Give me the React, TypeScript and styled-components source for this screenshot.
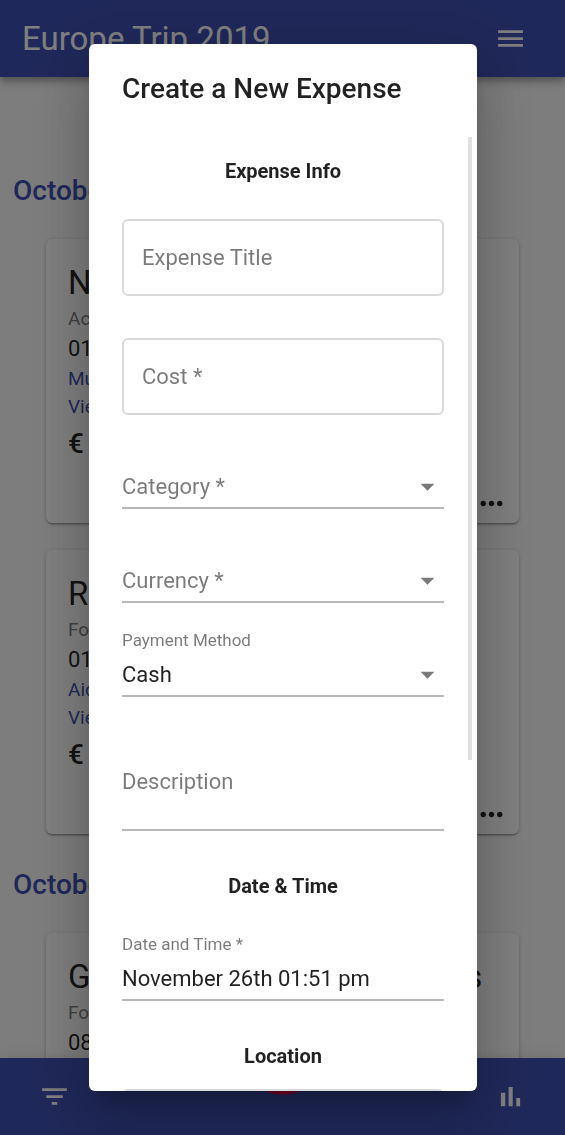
import React from "react";
import styled, { createGlobalStyle, css } from "styled-components";
import {
  MdAdd,
  MdArrowDropDown,
  MdFilterList,
  MdMenu,
  MdMoreHoriz,
} from "react-icons/md";

const color = {
  primary: "#3f51b5",
  secondary: "#f50057",
  page: "#fafafa",
  text: "rgba(0, 0, 0, 0.87)",
  muted: "rgba(0, 0, 0, 0.52)",
  underline: "rgba(0, 0, 0, 0.28)",
  outline: "rgba(0, 0, 0, 0.15)",
};

const GlobalStyle = createGlobalStyle`
  *, *::before, *::after { box-sizing: border-box; }
  body {
    margin: 0;
    background: ${color.page};
    color: ${color.text};
    font-family: Roboto, "Liberation Sans", sans-serif;
    font-size: 22px;
    -webkit-font-smoothing: antialiased;
  }
  h1, h2, h3, p { margin: 0; }
`;

/* ---------- Trip page ---------- */

const Page = styled.div`
  display: flex;
  flex-direction: column;
  height: 100vh;
  overflow: hidden;
`;

const Bar = styled.div`
  position: relative;
  z-index: 1;
  flex: none;
  display: flex;
  align-items: center;
  justify-content: space-between;
  height: 77px;
  padding: 0 38px;
  background: ${color.primary};
  color: #fff;
  box-shadow:
    0 3px 6px -1px rgba(0, 0, 0, 0.2),
    0 6px 7px rgba(0, 0, 0, 0.14),
    0 1px 14px rgba(0, 0, 0, 0.12);
`;

const TopBar = styled(Bar).attrs({ as: "header" })`
  padding-left: 22px;
`;

const TripTitle = styled.h1`
  font-size: 33px;
  font-weight: 400;
  line-height: 44px;
`;

const IconButton = styled.button`
  display: flex;
  padding: 0;
  border: 0;
  background: none;
  color: inherit;
  font-size: 33px;
  cursor: pointer;
`;

const AddButton = styled(IconButton)`
  position: absolute;
  top: -40px;
  left: 50%;
  align-items: center;
  justify-content: center;
  width: 77px;
  height: 77px;
  border-radius: 50%;
  background: ${color.secondary};
  transform: translateX(-50%);
`;

const Timeline = styled.main`
  flex: 1;
  min-height: 0;
  overflow: hidden;
  padding-top: 63px;
`;

const Day = styled.section`
  padding-top: 31px;
`;

const DayHeading = styled.h2`
  padding: 0 13px;
  color: ${color.primary};
  font-size: 28px;
  font-weight: 500;
  line-height: 40px;
`;

const CardList = styled.div`
  display: flex;
  flex-direction: column;
  gap: 27px;
  padding: 28px 46px 0;
`;

const Card = styled.article`
  border-radius: 6px;
  background: #fff;
  box-shadow:
    0 1px 4px rgba(0, 0, 0, 0.2),
    0 1px 1px rgba(0, 0, 0, 0.14),
    0 3px 1px -1px rgba(0, 0, 0, 0.12);
`;

const CardBody = styled.div`
  padding: 22px 22px 20px;
`;

const CardTitle = styled.h3`
  font-size: 33px;
  font-weight: 400;
  line-height: 44px;
  white-space: nowrap;
`;

const CardCategory = styled.p`
  color: ${color.muted};
  font-size: 19px;
  line-height: 28px;
`;

const CardTime = styled.p`
  line-height: 32px;
`;

const CardLink = styled.a`
  display: block;
  color: ${color.primary};
  font-size: 19px;
  line-height: 28px;
  text-decoration: none;
`;

const CardPrice = styled.p`
  font-size: 28px;
  font-weight: 500;
  line-height: 46px;
`;

const CardActions = styled.div`
  display: flex;
  justify-content: flex-end;
  padding: 0 11px 3px;
`;

/* ---------- Dialog ---------- */

const Backdrop = styled.div`
  position: fixed;
  inset: 0;
  z-index: 10;
  display: flex;
  align-items: center;
  justify-content: center;
  padding: 44px 88px 44px 89px;
  background: rgba(0, 0, 0, 0.5);
`;

const DialogFrame = styled.div`
  display: flex;
  width: 100%;
  max-width: 826px;
  max-height: 100%;
  border-radius: 6px;
  box-shadow:
    0 15px 21px -10px rgba(0, 0, 0, 0.2),
    0 33px 52px 4px rgba(0, 0, 0, 0.14),
    0 12px 63px 11px rgba(0, 0, 0, 0.12);
`;

const Dialog = styled.div`
  display: flex;
  flex-direction: column;
  width: 100%;
  border-radius: 6px;
  background: #fff;
  overflow: hidden;
`;

const DialogTitle = styled.h2`
  flex: none;
  padding: 23px 33px 22px;
  font-size: 28px;
  font-weight: 500;
  line-height: 44px;
`;

const ScrollArea = styled.div`
  position: relative;
  display: flex;
  flex: 1;
  min-height: 0;
`;

const Form = styled.form`
  flex: 1;
  min-width: 0;
  padding: 25px 33px;
  overflow-y: auto;
  scrollbar-width: none;
`;

const ScrollThumb = styled.div`
  position: absolute;
  top: 4px;
  right: 5px;
  width: 4px;
  height: 65%;
  background: #e0e0e0;
`;

const SectionHeading = styled.h3<{ $after: number }>`
  margin-bottom: ${(p) => p.$after}px;
  font-size: 20px;
  font-weight: 700;
  line-height: 26px;
  text-align: center;
`;

const FormSection = styled.section`
  & + & {
    padding-top: 42px;
  }
`;

const FieldStack = styled.div<{ $gap: number }>`
  display: grid;
  gap: ${(p) => p.$gap}px;

  & + & {
    margin-top: 26px;
  }
`;

const controlText = css`
  width: 100%;
  border: 0;
  margin: 0;
  background: none;
  color: ${color.text};
  font-family: inherit;
  font-size: 22px;
  line-height: 26px;
  outline: none;
`;

/* The control and its resting label share one grid cell. */
const Cell = styled.div`
  display: grid;
  align-items: center;

  & > * {
    grid-area: 1 / 1;
  }
`;

const OutlinedCell = styled(Cell)`
  height: 77px;
  border: 2px solid ${color.outline};
  border-radius: 6px;
`;

const UnderlinedCell = styled(Cell)`
  border-bottom: 2px solid ${color.underline};
`;

const RestingLabel = styled.label<{ $inset?: boolean }>`
  padding: ${(p) => (p.$inset ? "0 18px" : "2px 0 0")};
  color: ${color.muted};
  line-height: 26px;
  pointer-events: none;
`;

const SmallLabel = styled.label`
  display: block;
  min-height: 24px;
  color: ${color.muted};
  font-size: 17px;
  line-height: 22px;
`;

const OutlinedInput = styled.input`
  ${controlText}
  height: 100%;
  padding: 0 18px;
`;

const PlainInput = styled.input`
  ${controlText}
  height: 42px;
  padding: 0;
`;

const PlainSelect = styled.select`
  ${controlText}
  height: 42px;
  padding: 2px 33px 0 0;
  appearance: none;
`;

const PlainTextarea = styled.textarea`
  ${controlText}
  display: block;
  height: 69px;
  padding: 9px 0;
  resize: none;
`;

const DescriptionCell = styled(UnderlinedCell)`
  align-items: start;
  margin-top: 37px;

  label {
    padding-top: 9px;
  }
`;

const SelectArrow = styled(MdArrowDropDown)`
  justify-self: end;
  color: ${color.muted};
  font-size: 33px;
  pointer-events: none;
`;

function BarChartIcon() {
  return (
    <svg width="33" height="33" viewBox="0 0 24 24" fill="currentColor" aria-hidden>
      <path d="M5 9.2h3.2V19H5zM10.6 5h3v14h-3zM16.2 13H19v6h-2.8z" />
    </svg>
  );
}

type Expense = {
  title: string;
  category: string;
  time: string;
  place: string;
  price: string;
};

const days: { heading: string; expenses: Expense[] }[] = [
  {
    heading: "October 1st",
    expenses: [
      { title: "Night at Hostel", category: "Accommodation", time: "01:00 pm", place: "Munich, Germany", price: "€ 45.00" },
      { title: "Restaurant", category: "Food", time: "01:30 pm", place: "Aidenbachstraße", price: "€ 12.50" },
    ],
  },
  {
    heading: "October 2nd",
    expenses: [
      { title: "Groceries and Winter Gloves", category: "Food", time: "08:15 am", place: "Munich, Germany", price: "€ 18.20" },
    ],
  },
];

function ExpenseCard({ expense }: { expense: Expense }) {
  return (
    <Card>
      <CardBody>
        <CardTitle>{expense.title}</CardTitle>
        <CardCategory>{expense.category}</CardCategory>
        <CardTime>{expense.time}</CardTime>
        <CardLink href="#place">{expense.place}</CardLink>
        <CardLink href="#receipt">View Receipt</CardLink>
        <CardPrice>{expense.price}</CardPrice>
      </CardBody>
      <CardActions>
        <IconButton type="button" aria-label="More actions">
          <MdMoreHoriz />
        </IconButton>
      </CardActions>
    </Card>
  );
}

function OutlinedField({ id, label, required }: { id: string; label: string; required?: boolean }) {
  return (
    <OutlinedCell>
      <OutlinedInput id={id} type="text" required={required} />
      <RestingLabel htmlFor={id} $inset>
        {label}
      </RestingLabel>
    </OutlinedCell>
  );
}

function SelectField({ id, label, options, value }: { id: string; label: string; options: string[]; value?: string }) {
  return (
    <div>
      {value ? <SmallLabel htmlFor={id}>{label}</SmallLabel> : <SmallLabel as="div" />}
      <UnderlinedCell>
        <PlainSelect id={id} defaultValue={value ?? ""}>
          {!value && <option value="" />}
          {options.map((option) => (
            <option key={option}>{option}</option>
          ))}
        </PlainSelect>
        {!value && <RestingLabel htmlFor={id}>{label}</RestingLabel>}
        <SelectArrow aria-hidden />
      </UnderlinedCell>
    </div>
  );
}

function NewExpenseDialog() {
  return (
    <Backdrop>
      <DialogFrame>
        <Dialog role="dialog" aria-modal="true" aria-labelledby="dialog-title">
          <DialogTitle id="dialog-title">Create a New Expense</DialogTitle>
          <ScrollArea>
            <Form>
              <FormSection>
                <SectionHeading $after={35}>Expense Info</SectionHeading>
                <FieldStack $gap={42}>
                  <OutlinedField id="title" label="Expense Title" />
                  <OutlinedField id="cost" label="Cost *" required />
                </FieldStack>
                <FieldStack $gap={26}>
                  <SelectField id="category" label="Category *" options={["Food", "Accommodation"]} />
                  <SelectField id="currency" label="Currency *" options={["EUR", "USD"]} />
                  <SelectField id="payment" label="Payment Method" options={["Cash", "Card"]} value="Cash" />
                  <DescriptionCell>
                    <PlainTextarea id="description" />
                    <RestingLabel htmlFor="description">Description</RestingLabel>
                  </DescriptionCell>
                </FieldStack>
              </FormSection>
              <FormSection>
                <SectionHeading $after={34}>Date &amp; Time</SectionHeading>
                <SmallLabel htmlFor="date">Date and Time *</SmallLabel>
                <UnderlinedCell>
                  <PlainInput id="date" type="text" defaultValue="November 26th 01:51 pm" />
                </UnderlinedCell>
              </FormSection>
              <FormSection>
                <SectionHeading $after={20}>Location</SectionHeading>
                <OutlinedField id="location" label="Location" />
              </FormSection>
            </Form>
            <ScrollThumb />
          </ScrollArea>
        </Dialog>
      </DialogFrame>
    </Backdrop>
  );
}

export default function App() {
  return (
    <>
      <GlobalStyle />
      <Page>
        <TopBar>
          <TripTitle>Europe Trip 2019</TripTitle>
          <IconButton type="button" aria-label="Menu">
            <MdMenu />
          </IconButton>
        </TopBar>
        <Timeline>
          {days.map((day) => (
            <Day key={day.heading}>
              <DayHeading>{day.heading}</DayHeading>
              <CardList>
                {day.expenses.map((expense) => (
                  <ExpenseCard key={expense.title} expense={expense} />
                ))}
              </CardList>
            </Day>
          ))}
        </Timeline>
        <Bar as="footer">
          <IconButton type="button" aria-label="Filter">
            <MdFilterList />
          </IconButton>
          <AddButton type="button" aria-label="Add expense">
            <MdAdd />
          </AddButton>
          <IconButton type="button" aria-label="Statistics">
            <BarChartIcon />
          </IconButton>
        </Bar>
      </Page>
      <NewExpenseDialog />
    </>
  );
}
